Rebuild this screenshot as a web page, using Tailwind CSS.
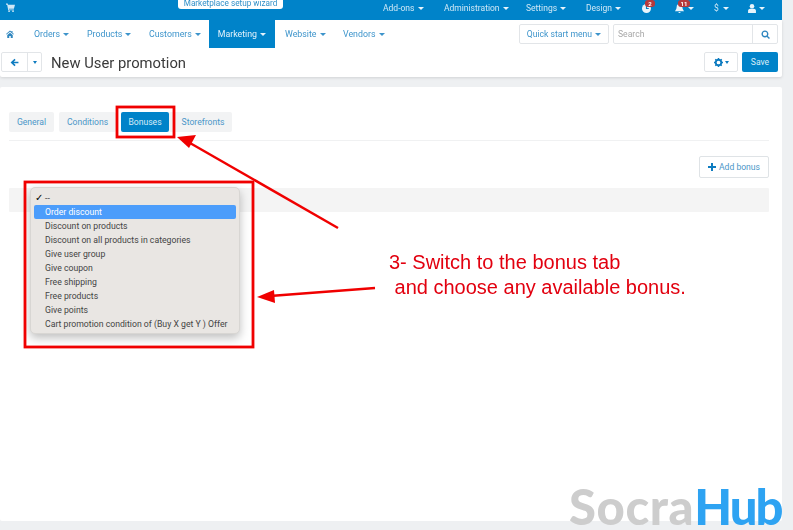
<!DOCTYPE html>
<html lang="en">
<head>
    <meta charset="UTF-8">
    <meta name="viewport" content="width=device-width, initial-scale=1.0">
    <title>New User promotion</title>
    <script src="https://cdn.jsdelivr.net/npm/@tailwindcss/browser@4"></script>
</head>
<body class="bg-[#eef0f2] font-['Roboto',sans-serif] text-[8.600px] overflow-hidden">
<div class="relative w-[793px] h-[530px] overflow-hidden blur-[0.35px]">
    <div class="w-[782px] h-[521px] flex flex-col">

        <!-- top bar -->
        <div class="h-[20px] bg-[#0083c9] text-[#cfe8f6] flex items-start pl-[6px] relative shrink-0">
            <svg class="w-[9px] h-[9px] mt-[3px]" viewBox="0 0 16 16" fill="#cfe8f6"><path d="M0 1h3l.6 2H16l-2 7H5l.4 1.500H14V13H4L2 3H0z"/><circle cx="5.500" cy="14.500" r="1.500"/><circle cx="12.500" cy="14.500" r="1.500"/></svg>
            <div class="ml-[163px] w-[105px] h-[9px] bg-white rounded-b-[3px] text-[#2f8fc8] text-[8.200px] leading-[6px] text-center whitespace-nowrap">Marketplace setup wizard</div>
            <div class="flex ml-[100px] mt-[3px] h-[10px] leading-[10px] text-[8.500px]">
                <span class="w-[61px]">Add-ons <i class="inline-block align-middle border-x-[3px] border-t-[3px] border-x-transparent border-t-[#e8f4fb] ml-[1px]"></i></span>
                <span class="w-[82px]">Administration <i class="inline-block align-middle border-x-[3px] border-t-[3px] border-x-transparent border-t-[#e8f4fb] ml-[1px]"></i></span>
                <span class="w-[60px]">Settings <i class="inline-block align-middle border-x-[3px] border-t-[3px] border-x-transparent border-t-[#e8f4fb] ml-[1px]"></i></span>
                <span class="w-[56px]">Design <i class="inline-block align-middle border-x-[3px] border-t-[3px] border-x-transparent border-t-[#e8f4fb] ml-[1px]"></i></span>
                <span class="w-[33px] relative">
                    <svg class="w-[9px] h-[9px] mt-[1px]" viewBox="0 0 16 16" fill="#e8f4fb"><circle cx="8" cy="8" r="8"/><path d="M8 3v5h4" stroke="#0083c9" stroke-width="2" fill="none"/></svg>
                    <b class="absolute left-[3px] -top-[3px] w-[10px] h-[7px] rounded-[3px] bg-[#b5393c] text-white text-[6px] leading-[7px] text-center">2</b>
                </span>
                <span class="w-[39px] relative flex items-start">
                    <svg class="w-[9px] h-[9px] mt-[1px]" viewBox="0 0 16 16" fill="#e8f4fb"><path d="M8 0a5 5 0 0 0-5 5c0 5-3 7-3 8h16c0-1-3-3-3-8a5 5 0 0 0-5-5zM6 14a2 2 0 0 0 4 0z"/></svg>
                    <i class="inline-block border-x-[3px] border-t-[3px] border-x-transparent border-t-[#e8f4fb] ml-[4px] mt-[4px]"></i>
                    <b class="absolute left-[3px] -top-[3px] w-[12px] h-[7px] rounded-[3px] bg-[#b5393c] text-white text-[6px] leading-[7px] text-center">11</b>
                </span>
                <span class="w-[34px]">$ <i class="inline-block align-middle border-x-[3px] border-t-[3px] border-x-transparent border-t-[#e8f4fb] ml-[2px]"></i></span>
                <span class="flex items-start">
                    <svg class="w-[8px] h-[9px] mt-[1px]" viewBox="0 0 14 16" fill="#e8f4fb"><circle cx="7" cy="4" r="4"/><path d="M0 16v-4c0-2 2-3.500 3.500-3.500h7C12 8.500 14 10 14 12v4z"/></svg>
                    <i class="inline-block border-x-[3px] border-t-[3px] border-x-transparent border-t-[#e8f4fb] ml-[3px] mt-[4px]"></i>
                </span>
            </div>
        </div>

        <!-- nav + title -->
        <div class="bg-white h-[57px] shrink-0 rounded-b-[2px] shadow-[0_1px_3px_rgba(0,0,0,0.12)]">
            <div class="h-[28px] flex items-start text-[#3d94cb] relative">
                <svg class="w-[8px] h-[8px] ml-[6px] mt-[10px]" viewBox="0 0 16 16" fill="#2f86bf"><path d="M8 1 0 8l1 1.200L8 3.500l7 5.700L16 8l-3-2.600V2h-2v1.700zM2.500 10v6h4v-4h3v4h4v-6L8 5.500z"/></svg>
                <div class="flex ml-[20px] h-[28px] leading-[29px] text-[8.800px]">
                    <span class="w-[53px]">Orders <i class="inline-block align-middle border-x-[3px] border-t-[3px] border-x-transparent border-t-[#3d94cb] ml-[1px]"></i></span>
                    <span class="w-[62px]">Products <i class="inline-block align-middle border-x-[3px] border-t-[3px] border-x-transparent border-t-[#3d94cb] ml-[1px]"></i></span>
                    <span class="w-[60px]">Customers <i class="inline-block align-middle border-x-[3px] border-t-[3px] border-x-transparent border-t-[#3d94cb] ml-[1px]"></i></span>
                    <span class="w-[66px] bg-[#0083c9] text-[#e3f2fb] text-center">Marketing <i class="inline-block align-middle border-x-[3px] border-t-[3px] border-x-transparent border-t-[#e3f2fb] ml-[1px]"></i></span>
                    <span class="w-[58px] ml-[10px]">Website <i class="inline-block align-middle border-x-[3px] border-t-[3px] border-x-transparent border-t-[#3d94cb] ml-[1px]"></i></span>
                    <span class="w-[60px]">Vendors <i class="inline-block align-middle border-x-[3px] border-t-[3px] border-x-transparent border-t-[#3d94cb] ml-[1px]"></i></span>
                </div>
                <div class="ml-auto mr-[4px] mt-[4px] flex gap-[4px]">
                    <div class="w-[90px] h-[20px] border border-[#e2e5e8] rounded-[2px] text-center leading-[19px] text-[#3d94cb]">Quick start menu <i class="inline-block align-middle border-x-[3px] border-t-[3px] border-x-transparent border-t-[#3d94cb] ml-[1px]"></i></div>
                    <div class="w-[165px] h-[20px] border border-[#e2e5e8] rounded-[2px] flex leading-[19px] text-[#a8a8a8]">
                        <span class="flex-1 pl-[4px]">Search</span>
                        <span class="w-[25px] border-l border-[#e2e5e8] flex items-center justify-center">
                            <svg class="w-[9px] h-[9px]" viewBox="0 0 16 16" fill="none" stroke="#2f86bf" stroke-width="2.400"><circle cx="7" cy="7" r="5"/><path d="m10.500 10.500 4.500 4.500"/></svg>
                        </span>
                    </div>
                </div>
            </div>
            <div class="h-[29px] flex items-start relative">
                <div class="ml-[1px] mt-[4px] w-[41px] h-[20px] flex border border-[#e2e5e8] rounded-[2px] shrink-0">
                    <span class="w-[25px] flex items-center justify-center">
                        <svg class="w-[9px] h-[9px]" viewBox="0 0 16 16" fill="#0f7cc0"><path d="M8 1.500 1 8l7 6.500 2-2L6.500 9.500H15v-3H6.500L10 3.500z"/></svg>
                    </span>
                    <span class="flex-1 border-l border-[#e2e5e8] flex items-center justify-center"><i class="inline-block border-x-[2.500px] border-t-[3px] border-x-transparent border-t-[#0f7cc0]"></i></span>
                </div>
                <h1 class="ml-[9px] mt-[6px] text-[14.800px] leading-[18px] text-[#3a3a3a] font-normal">New User promotion</h1>
                <div class="ml-auto mr-[4px] mt-[4px] flex gap-[4px]">
                    <div class="w-[34px] h-[20px] border border-[#e2e5e8] rounded-[2px] flex items-center justify-center gap-[2px]">
                        <svg class="w-[9px] h-[9px]" viewBox="0 0 16 16"><circle cx="8" cy="8" r="5" fill="none" stroke="#0f7cc0" stroke-width="3.400"/><path d="M8 0v16M0 8h16M2.300 2.300l11.400 11.400M13.700 2.300 2.300 13.700" stroke="#0f7cc0" stroke-width="2.600" stroke-dasharray="2.600 10.800 2.600 10"/></svg>
                        <i class="inline-block border-x-[2.500px] border-t-[3px] border-x-transparent border-t-[#0f7cc0]"></i>
                    </div>
                    <div class="w-[36px] h-[20px] rounded-[2px] bg-[#0083c9] text-[#d8edf8] text-center leading-[20px]">Save</div>
                </div>
            </div>
        </div>

        <!-- content -->
        <div class="mt-[10px] bg-white flex-1 rounded-[2px] pl-[9px] pt-[25px] pr-[13px]">
            <div class="flex gap-[5px] h-[20px] leading-[21px] text-[#4a96c8]">
                <span class="w-[45px] text-center bg-[#f2f3f4] rounded-[2px]">General</span>
                <span class="w-[57px] text-center bg-[#f2f3f4] rounded-[2px]">Conditions</span>
                <span class="w-[48px] text-center bg-[#0083c9] text-[#d8edf8] rounded-[2px]">Bonuses</span>
                <span class="w-[63px] -ml-[5px] pl-[5px] text-center bg-[#f2f3f4] rounded-[2px]">Storefronts</span>
            </div>
            <div class="mt-[8px] border-t border-[#f0f1f2]"></div>
            <div class="mt-[15px] flex justify-end">
                <div class="w-[70px] h-[22px] border border-[#dfe3e6] rounded-[2px] flex items-center justify-center gap-[3px] text-[#4a96c8]">
                    <svg class="w-[8px] h-[8px]" viewBox="0 0 8 8" fill="#0f7cc0"><path d="M3 0h2v3h3v2H5v3H3V5H0V3h3z"/></svg>
                    <span>Add bonus</span>
                </div>
            </div>
            <div class="mt-[10px] h-[24px] bg-[#f4f4f4] rounded-[1px]"></div>
        </div>
    </div>

    <!-- native select popup -->
    <div class="absolute left-[30px] top-[187px] w-[210px] h-[147px] bg-[#e9e6e3] rounded-[5px] border border-[#d8d6d3] shadow-[0_4px_10px_rgba(0,0,0,0.25)] pt-[3px] px-[3px] text-[8.700px] leading-[14px] text-[#444]">
        <div class="pl-[11px] relative"><span class="absolute left-[1px] text-[10px] text-black">✓</span>--</div>
        <div class="pl-[11px] bg-[#4c9dfb] text-white rounded-[2px]">Order discount</div>
        <div class="pl-[11px]">Discount on products</div>
        <div class="pl-[11px]">Discount on all products in categories</div>
        <div class="pl-[11px]">Give user group</div>
        <div class="pl-[11px]">Give coupon</div>
        <div class="pl-[11px]">Free shipping</div>
        <div class="pl-[11px]">Free products</div>
        <div class="pl-[11px]">Give points</div>
        <div class="pl-[11px] whitespace-nowrap">Cart promotion condition of (Buy X get Y ) Offer</div>
    </div>

    <!-- red annotations -->
    <svg class="absolute left-0 top-0" width="793" height="530" viewBox="0 0 793 530" fill="none">
        <rect x="117" y="107" width="57" height="30" stroke="#f00000" stroke-width="2.800"/>
        <rect x="25" y="182" width="228" height="165" stroke="#f00000" stroke-width="2.800"/>
        <path d="M338 228 190 143" stroke="#f00000" stroke-width="2.400"/>
        <path d="m177 137 19-2-7 13z" fill="#f00000"/>
        <path d="M375 288 270 296" stroke="#f00000" stroke-width="2.400"/>
        <path d="m257 297 17-7 1 13z" fill="#f00000"/>
    </svg>
    <div class="absolute left-[389px] top-[250px] font-['Liberation_Sans',sans-serif] text-[20px] leading-[25px] text-[#e2000f] whitespace-pre">3- Switch to the bonus tab
 and choose any available bonus.</div>

    <!-- watermark -->
    <div class="absolute left-[569px] top-[483px] font-['Lato',sans-serif] font-black text-[49px] leading-[46px] whitespace-nowrap"><span class="text-[#cdcdcd] tracking-[0.6px]">Socra</span><span class="text-[#2ea3f2] tracking-[-2px]">Hub</span></div>
</div>
</body>
</html>
